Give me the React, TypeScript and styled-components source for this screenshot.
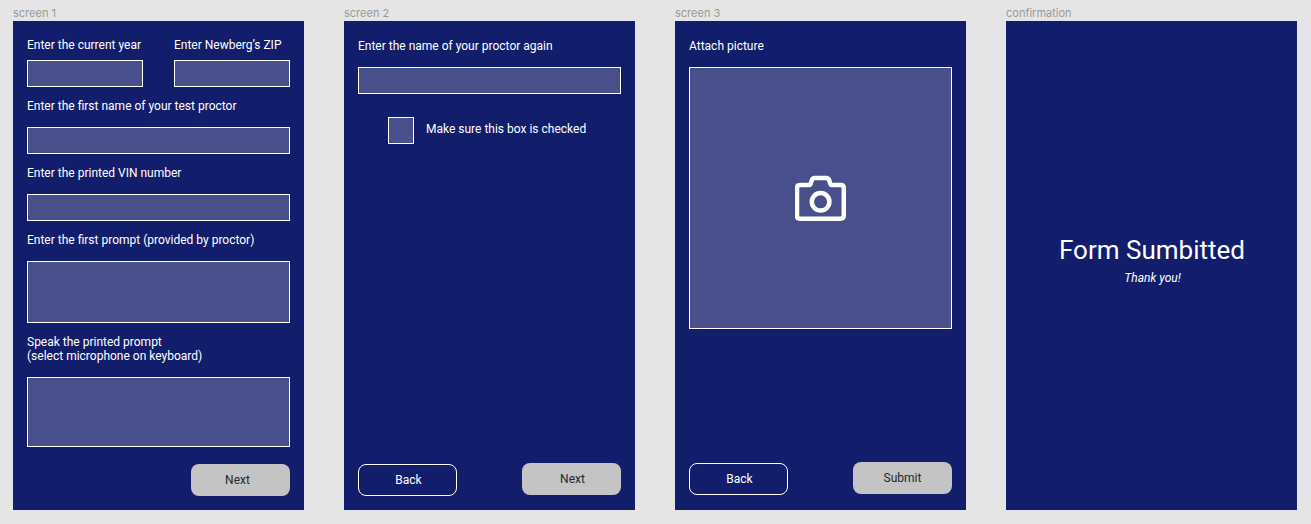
import React from "react";
import styled, { createGlobalStyle } from "styled-components";

const GlobalStyle = createGlobalStyle`
  * { box-sizing: border-box; }
  body { margin: 0; background: #e5e5e5; overflow: hidden; }
`;

const Board = styled.main`
  display: flex;
  gap: 40px;
  width: 1311px;
  height: 524px;
  padding: 6px 13px 0;
  background: #e5e5e5;
  font-family: Roboto, sans-serif;
  font-size: 12px;
  line-height: 14px;
  color: #fff;
`;

const Artboard = styled.section`
  width: 291px;
`;

const ArtboardName = styled.div`
  height: 15px;
  font-family: Inter, sans-serif;
  font-size: 11px;
  line-height: 15px;
  color: #999;
`;

const Screen = styled.div<{ $top?: number; $bottom?: number }>`
  display: flex;
  flex-direction: column;
  height: 489px;
  padding: ${(p) => p.$top ?? 18}px 14px ${(p) => p.$bottom ?? 14}px;
  background: #121d6b;
`;

const FieldRow = styled.div`
  display: grid;
  grid-template-columns: 116px 116px;
  justify-content: space-between;
`;

const Field = styled.label<{ $gap?: number }>`
  display: flex;
  flex-direction: column;
  gap: ${(p) => p.$gap ?? 14}px;
  margin-bottom: 12px;
  white-space: nowrap;
`;

const Input = styled.span<{ $height?: number }>`
  display: flex;
  align-items: center;
  justify-content: center;
  height: ${(p) => p.$height ?? 27}px;
  border: 1px solid #fff;
  background: #484f8b;
`;

const CheckRow = styled.div`
  display: flex;
  gap: 12px;
  margin: 11px 0 0 30px;
  line-height: 24px;
`;

const Checkbox = styled.span`
  width: 26px;
  height: 27px;
  border: 1px solid #fff;
  background: #484f8b;
`;

const Actions = styled.div<{ $end?: boolean }>`
  display: flex;
  justify-content: ${(p) => (p.$end ? "flex-end" : "space-between")};
  align-items: flex-end;
  margin-top: auto;
`;

const Button = styled.button`
  width: 99px;
  height: 32px;
  padding: 0 6px 0 0;
  border: 0;
  border-radius: 8px;
  background: #c4c4c4;
  color: #26262e;
  font: 12px/14px Roboto, sans-serif;
`;

const PrimaryButton = styled(Button)`
  margin-bottom: 1px;
  padding: 0 0 0 2px;
`;

const SubmitButton = styled(PrimaryButton)`
  padding: 0;
`;

const BackButton = styled(Button)`
  padding: 0 0 0 2px;
  border: 1px solid #fff;
  background: transparent;
  color: #fff;
`;

const Confirmation = styled(Screen)`
  align-items: center;
  padding: 214px 14px 14px 15px;
`;

const Title = styled.h1`
  margin: 0;
  font-size: 26px;
  font-weight: 400;
  line-height: 30px;
`;

const Thanks = styled.p`
  margin: 6px 0 0;
  padding-left: 1px;
  font-style: italic;
`;

const CameraIcon = () => (
  <svg width="52" height="46" viewBox="0 -0.6 52 46" fill="none" stroke="#fff" strokeWidth="4.5" strokeLinejoin="round">
    <path d="M5.3 9.5H13.4Q15.2 9.5 15.8 7.8L16.8 4.6Q17.5 2.5 19.7 2.5H31.3Q33.5 2.5 34.2 4.6L35.2 7.8Q35.8 9.5 37.6 9.5H45.5Q48.8 9.5 48.8 12.6V40Q48.8 43.1 45.5 43.1H5.3Q2 43.1 2 40V12.6Q2 9.5 5.3 9.5Z" />
    <circle cx="25.6" cy="26.2" r="8.8" />
  </svg>
);

export default function App() {
  return (
    <>
      <GlobalStyle />
      <Board>
        <Artboard>
          <ArtboardName>screen 1</ArtboardName>
          <Screen $top={17}>
            <FieldRow>
              <Field $gap={8}>Enter the current year<Input /></Field>
              <Field $gap={8}>Enter Newberg’s ZIP<Input /></Field>
            </FieldRow>
            <Field>Enter the first name of your test proctor<Input /></Field>
            <Field>Enter the printed VIN number<Input /></Field>
            <Field>Enter the first prompt (provided by proctor)<Input $height={62} /></Field>
            <Field>
              <span>Speak the printed prompt<br />(select microphone on keyboard)</span>
              <Input $height={70} />
            </Field>
            <Actions $end><Button>Next</Button></Actions>
          </Screen>
        </Artboard>

        <Artboard>
          <ArtboardName>screen 2</ArtboardName>
          <Screen>
            <Field>Enter the name of your proctor again<Input /></Field>
            <CheckRow><Checkbox />Make sure this box is checked</CheckRow>
            <Actions>
              <BackButton>Back</BackButton>
              <PrimaryButton>Next</PrimaryButton>
            </Actions>
          </Screen>
        </Artboard>

        <Artboard>
          <ArtboardName>screen 3</ArtboardName>
          <Screen $bottom={15}>
            <Field>Attach picture<Input $height={262}><CameraIcon /></Input></Field>
            <Actions>
              <BackButton>Back</BackButton>
              <SubmitButton>Submit</SubmitButton>
            </Actions>
          </Screen>
        </Artboard>

        <Artboard>
          <ArtboardName>confirmation</ArtboardName>
          <Confirmation>
            <Title>Form Sumbitted</Title>
            <Thanks>Thank you!</Thanks>
          </Confirmation>
        </Artboard>
      </Board>
    </>
  );
}
